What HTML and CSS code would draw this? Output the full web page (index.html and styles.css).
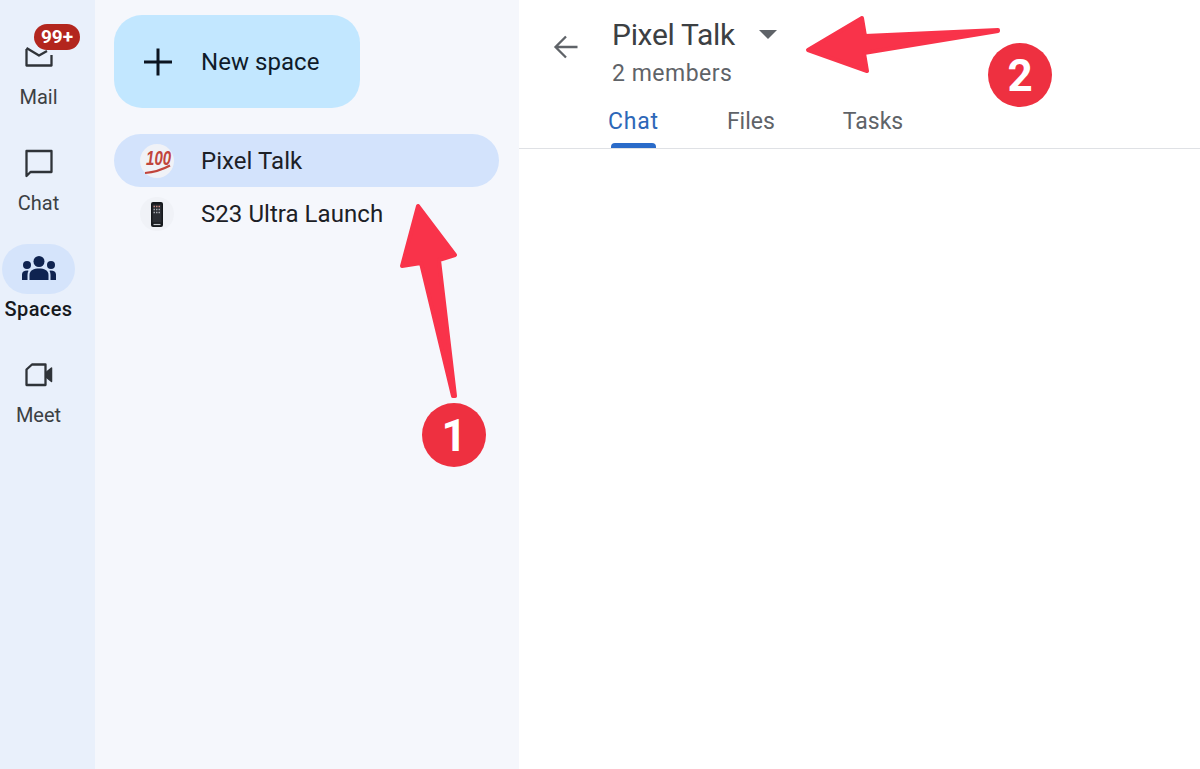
FILE: index.html
```html
<!DOCTYPE html>
<html lang="en">

<head>
    <meta charset="UTF-8">
    <meta name="viewport" content="width=device-width, initial-scale=1.0">
    <title>Pixel Talk</title>
    <link rel="stylesheet" href="styles.css">
</head>

<body>
    <div class="app">
        <nav class="rail">
            <div class="rail-item">
                <div class="rail-icon">
                    <svg width="32" height="32" viewBox="0 0 32 32" fill="none" stroke="#2f3338" stroke-width="2.3">
                        <path d="M3.500 8 V24.500 H28.500 V14" stroke-linejoin="round" />
                        <path d="M3.500 7 L16 14.500 L24 10" stroke-linejoin="round" />
                    </svg>
                    <span class="badge">99+</span>
                </div>
                <span class="rail-label">Mail</span>
            </div>
            <div class="rail-item">
                <div class="rail-icon">
                    <svg width="32" height="32" viewBox="0 0 32 32" fill="none" stroke="#2f3338" stroke-width="2.3">
                        <path d="M3.500 4 H28.500 V25 H7.500 L3.500 29 Z" stroke-linejoin="round" />
                    </svg>
                </div>
                <span class="rail-label">Chat</span>
            </div>
            <div class="rail-item active">
                <div class="rail-icon">
                    <svg width="36" height="28" viewBox="0 0 36 28" fill="#0f2350">
                        <circle cx="18" cy="6.500" r="5.500" />
                        <circle cx="6" cy="10" r="4" />
                        <circle cx="30" cy="10" r="4" />
                        <path d="M8.500 25 V20 C8.500 15 13 13.500 18 13.500 C23 13.500 27.500 15 27.500 20 V25 Z" />
                        <path d="M1 25 V19.500 C1 17 3 15.500 6.500 15.500 L7.500 15.800 C6.800 17 6.500 18.500 6.500 20 V25 Z" />
                        <path d="M35 25 V19.500 C35 17 33 15.500 29.500 15.500 L28.500 15.800 C29.200 17 29.500 18.500 29.500 20 V25 Z" />
                    </svg>
                </div>
                <span class="rail-label">Spaces</span>
            </div>
            <div class="rail-item">
                <div class="rail-icon">
                    <svg width="32" height="32" viewBox="0 0 32 32" fill="none" stroke="#2f3338" stroke-width="2.3">
                        <path d="M9 5.500 H22.500 V26 H3.500 V10.500 Z" stroke-linejoin="round" />
                        <path d="M23 13.500 L28.500 9 V22.500 L23 18 Z" fill="#2f3338" stroke-linejoin="round" stroke-width="1.500" />
                    </svg>
                </div>
                <span class="rail-label">Meet</span>
            </div>
        </nav>

        <aside class="side">
            <button class="new-space">
                <svg width="30" height="30" viewBox="0 0 30 30" stroke="#0b1420" stroke-width="3">
                    <path d="M15 1.500 V28.500 M1 15 H29" />
                </svg>
                <span>New space</span>
            </button>
            <ul class="space-list">
                <li class="space selected">
                    <span class="space-emoji">
                        <svg width="34" height="34" viewBox="0 0 34 34">
                            <text class="hundred" transform="translate(6 21) scale(1 1.35)">100</text>
                            <path d="M5 29 Q18 28 30 21.500" fill="none" stroke="#c1443c" stroke-width="2.200" />
                        </svg>
                    </span>
                    <span>Pixel Talk</span>
                </li>
                <li class="space">
                    <span class="space-emoji">
                        <svg width="34" height="34" viewBox="0 0 34 34">
                            <rect x="11" y="5" width="12" height="25" rx="2" fill="#16191d" />
                            <rect x="12.500" y="7.500" width="9" height="18" fill="#2a2d33" />
                            <path d="M13.500 9.500 H20.500" stroke="#c98a80" stroke-width="1.300" stroke-dasharray="1.500 1" />
                            <path d="M13.500 12.500 H20.500 M13.500 15.500 H20.500" stroke="#a4a7ad" stroke-width="1.300" stroke-dasharray="1.500 1" />
                            <path d="M13.500 27.500 H20.500" stroke="#c4c7cc" stroke-width="1.200" />
                        </svg>
                    </span>
                    <span>S23 Ultra Launch</span>
                </li>
            </ul>
        </aside>

        <main class="main">
            <header class="head">
                <svg class="back" width="26" height="26" viewBox="0 0 26 26" fill="none" stroke="#5f6368" stroke-width="2.300">
                    <path d="M24.500 13 H3 M13 2.500 L2.500 13 L13 23.500" />
                </svg>
                <div class="head-text">
                    <div class="title-row">
                        <h1>Pixel Talk</h1>
                        <span class="caret"></span>
                    </div>
                    <p>2 members</p>
                </div>
            </header>
            <div class="tabs">
                <div class="tab current">Chat</div>
                <div class="tab">Files</div>
                <div class="tab">Tasks</div>
            </div>
        </main>
    </div>

    <!-- annotations on top of the screenshot -->
    <svg class="marks" width="1200" height="769" viewBox="0 0 1200 769">
        <g fill="#f9334a" stroke="#f9334a" stroke-width="4" stroke-linejoin="round">
            <path d="M418 206 L455 255 L439 260 L455 396 L453 396 L421 263 L402 266 Z" />
            <path d="M998 30 L865 36 L862 18 L808 50 L867 71 L864 53 L998 31 Z" />
        </g>
        <circle cx="454" cy="435" r="32" fill="#ee3040" />
        <circle cx="1020" cy="75" r="32" fill="#ee3040" />
        <text x="454" y="451" class="mark-num" text-anchor="middle">1</text>
        <text x="1020" y="91" class="mark-num" text-anchor="middle">2</text>
    </svg>
</body>

</html>
```

FILE: styles.css
```css
* {
    box-sizing: border-box;
}

body {
    margin: 0;
    height: 769px;
    overflow: hidden;
    font-family: Roboto, "Liberation Sans", sans-serif;
    color: #1f2328;
    background: #ffffff;
    position: relative;
}

.app {
    display: flex;
    height: 769px;
}

.rail {
    width: 95px;
    flex-shrink: 0;
    background: #e9f0fb;
    padding: 32px 0 0 2px;
}

.rail-item {
    width: 73px;
    margin-bottom: 30px;
    display: flex;
    flex-direction: column;
    align-items: center;
}

.rail-icon {
    width: 73px;
    height: 50px;
    border-radius: 25px;
    display: flex;
    align-items: center;
    justify-content: center;
    position: relative;
}

.rail-label {
    margin-top: 4px;
    line-height: 22px;
    font-size: 20px;
    color: #3c4043;
}

.rail-item.active .rail-icon {
    background: #d5e4fb;
}

.rail-item.active .rail-label {
    color: #16191d;
    font-weight: 500;
    letter-spacing: 0.4px;
}

.badge {
    position: absolute;
    top: -8px;
    left: 32px;
    width: 46px;
    height: 26px;
    border-radius: 13px;
    background: #b3261e;
    color: #ffffff;
    font-size: 19px;
    font-weight: 700;
    line-height: 26px;
    text-align: center;
}

.side {
    width: 424px;
    flex-shrink: 0;
    background: #f5f7fc;
    padding: 15px 20px 0 19px;
}

.new-space {
    width: 246px;
    height: 93px;
    border: none;
    border-radius: 28px;
    background: #c2e7ff;
    display: flex;
    align-items: center;
    gap: 28px;
    padding: 0 0 0 29px;
    font-family: inherit;
    font-size: 24px;
    letter-spacing: 0.05px;
    color: #0f1b2a;
}

.space-list {
    list-style: none;
    margin: 26px 0 0;
    padding: 0;
}

.space {
    height: 53px;
    border-radius: 27px;
    display: flex;
    align-items: center;
    gap: 27px;
    padding-left: 26px;
    font-size: 24px;
    letter-spacing: 0.05px;
    color: #1c2026;
}

.space.selected {
    background: #d3e3fc;
}

.space-emoji {
    width: 34px;
    height: 34px;
    border-radius: 50%;
    background: #f0f2f7;
    display: flex;
}

.hundred {
    font-family: "Liberation Sans", sans-serif;
    font-size: 15px;
    font-weight: 700;
    font-style: italic;
    fill: #c1443c;
}

.main {
    flex: 1;
    background: #ffffff;
    border-top-left-radius: 20px;
}

.head {
    height: 104px;
    display: flex;
    padding: 0 0 0 34px;
}

.back {
    margin: 34px 33px 0 0;
}

.head-text {
    padding-top: 14px;
}

.title-row {
    display: flex;
    align-items: center;
    height: 40px;
}

h1 {
    margin: 0;
    font-size: 30px;
    font-weight: 400;
    letter-spacing: -0.3px;
    color: #3c4043;
}

.caret {
    margin-left: 24px;
    border-left: 9px solid transparent;
    border-right: 9px solid transparent;
    border-top: 9px solid #5f6368;
}

.head-text p {
    margin: 6px 0 0;
    font-size: 23px;
    line-height: 28px;
    letter-spacing: 0.5px;
    color: #5f6368;
}

.tabs {
    height: 45px;
    display: flex;
    padding-left: 89px;
    border-bottom: 1px solid #dfe1e5;
}

.tab {
    font-size: 23px;
    line-height: 36px;
    color: #5f6368;
    margin-right: 68px;
    position: relative;
}

.tab.current {
    color: #2d67b8;
    letter-spacing: 0.8px;
}

.tab.current::after {
    content: "";
    position: absolute;
    left: 3px;
    right: 3px;
    top: 39px;
    height: 5px;
    background: #2a6bc9;
    border-radius: 4px 4px 0 0;
}

.marks {
    position: absolute;
    top: 0;
    left: 0;
}

.mark-num {
    font-family: Roboto, sans-serif;
    font-size: 44px;
    font-weight: 700;
    fill: #ffffff;
}
```
